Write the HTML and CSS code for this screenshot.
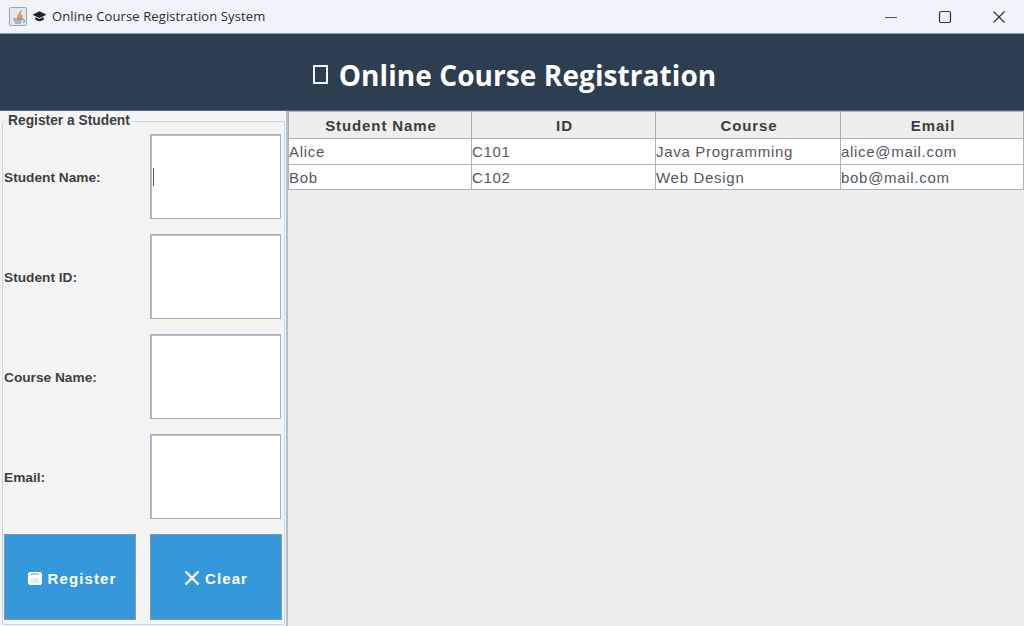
FILE: index.html
```html
<!DOCTYPE html>
<html lang="en">
<head>
<meta charset="utf-8">
<title>Online Course Registration System</title>
<link rel="stylesheet" href="styles.css">
</head>
<body>
<div class="window">
  <div class="titlebar">
    <div class="app-title">
      <svg class="java-icon" width="20" height="20" viewBox="0 0 20 20">
        <rect x="0.5" y="0.5" width="17" height="18" rx="1.5" fill="#e4e8ee" stroke="#9aa5b3"/>
        <path d="M8 13 L8 9 L11 4 L13 3 L12 7 L14 9 L13 13Z" fill="#ea9a58"/>
        <path d="M4 12h10M5 14h8M6 16h6" stroke="#5f86ad" stroke-width="1.2" fill="none"/>
        <path d="M14 12.500a1.500 1.500 0 0 1 0 3" stroke="#5f86ad" fill="none"/>
      </svg>
      <svg class="cap-icon" width="15" height="13" viewBox="0 0 16 13">
        <path d="M8 1 L15.500 4.500 L8 8 L0.500 4.500Z" fill="#222"/>
        <path d="M3.500 7 L3.500 10 Q8 13 12.500 10 L12.500 7 L8 9.200Z" fill="#222"/>
      </svg>
      <span class="title-text">Online Course Registration System</span>
    </div>
    <div class="win-controls">
      <svg class="ctl" width="14" height="14" viewBox="0 0 14 14"><path d="M1 7.500h12" stroke="#555" fill="none"/></svg>
      <svg class="ctl" width="14" height="14" viewBox="0 0 14 14"><rect x="1.500" y="1.500" width="11" height="11" rx="1.500" stroke="#333" stroke-width="1.200" fill="none"/></svg>
      <svg class="ctl" width="14" height="14" viewBox="0 0 14 14"><path d="M1.500 1.500l11 11M12.500 1.500l-11 11" stroke="#333" stroke-width="1.200" fill="none"/></svg>
    </div>
  </div>
  <header class="banner">
    <span class="tofu"></span>
    <h1 class="banner-title">Online Course Registration</h1>
  </header>
  <main class="content">
    <aside class="side">
      <fieldset class="group">
        <legend class="group-title">Register a Student</legend>
        <div class="form-grid">
          <label class="field-label">Student Name:</label>
          <div class="input focused"><span class="caret"></span></div>
          <label class="field-label">Student ID:</label>
          <div class="input"></div>
          <label class="field-label">Course Name:</label>
          <div class="input"></div>
          <label class="field-label">Email:</label>
          <div class="input"></div>
          <button class="btn btn-register" type="button">
            <svg width="14" height="13" viewBox="0 0 14 13"><path d="M0 1.500 1.500 0H12.500L14 1.500V11.500L12.500 13H1.500L0 11.500Z" fill="#fff"/><rect x="3" y="1" width="8" height="2" fill="#a8cdee"/><rect x="3" y="6" width="8" height="5" fill="#dcecf9"/></svg>
            <span>Register</span>
          </button>
          <button class="btn" type="button">
            <svg width="16" height="16" viewBox="0 0 16 16"><path d="M1.500 1.500l13 13M14.500 1.500l-13 13" stroke="#fff" stroke-width="2.400" fill="none"/></svg>
            <span>Clear</span>
          </button>
        </div>
      </fieldset>
    </aside>
    <section class="table-area">
      <table class="grid">
        <colgroup>
          <col class="c1"><col class="c2"><col class="c3"><col class="c4">
        </colgroup>
        <thead>
          <tr><th>Student Name</th><th>ID</th><th>Course</th><th>Email</th></tr>
        </thead>
        <tbody>
          <tr><td>Alice</td><td>C101</td><td>Java Programming</td><td>alice@mail.com</td></tr>
          <tr><td>Bob</td><td>C102</td><td>Web Design</td><td>bob@mail.com</td></tr>
        </tbody>
      </table>
    </section>
  </main>
</div>
</body>
</html>
```

FILE: styles.css
```css
* { box-sizing: border-box; }
html, body { margin: 0; padding: 0; }
body { font-family: "Liberation Sans", Arial, sans-serif; background: #eee; overflow: hidden; }
.window { width: 1024px; height: 626px; display: flex; flex-direction: column; }

.titlebar { height: 34px; flex: none; background: #eef4f9; display: flex; justify-content: space-between; align-items: center; border-bottom: 1px solid #8f9dab; }
.app-title { display: flex; align-items: center; padding-left: 9px; }
.java-icon { display: block; margin-right: 3px; }
.cap-icon { display: block; margin-right: 5px; }
.title-text { font-family: "Open Sans", sans-serif; font-size: 13px; color: #2a2a2a; letter-spacing: 0.12px; padding-bottom: 2px; }
.win-controls { display: flex; gap: 40px; padding-right: 18px; }
.ctl { display: block; }

.banner { height: 77px; flex: none; background: #2c3e50; display: flex; justify-content: center; align-items: center; gap: 11px; padding: 5px 0 0 5px; border-bottom: 1px solid #55677a; }
.tofu { display: block; width: 15px; height: 19px; border: 2px solid #f4f6f8; }
.banner-title { margin: 0; font-family: "Open Sans", sans-serif; font-weight: 700; font-size: 28px; letter-spacing: 0.08px; line-height: 38px; color: #fff; }

.content { flex: 1; display: flex; min-height: 0; }
.side { width: 288px; flex: none; background: #f4f4f4; border-right: 2px solid #b6bec7; padding: 3px 1px 3px 2px; }
.group { margin: 0; padding: 6px 0 0 1px; height: 511px; border: 1px solid #c5d8ea; border-radius: 2px; min-width: 0; }
.group-title { margin-left: 1px; padding: 0 3px; font-size: 13.800px; font-weight: 700; color: #3c3f44; line-height: 14px; white-space: nowrap; }
.form-grid { display: grid; grid-template-columns: 132px 131px; column-gap: 14px; grid-auto-rows: 85px; row-gap: 15px; }
.field-label { font-size: 13.700px; font-weight: 700; color: #3c3f44; align-self: center; white-space: nowrap; padding-top: 2px; }
.input { background: #fff; border: 1px solid #a5b1bf; box-shadow: inset 1px 1px 0 #b4bdc8; position: relative; }
.caret { position: absolute; left: 2px; top: 33px; width: 1px; height: 18px; background: #555; }
.btn { background: #3498db; border: 1px solid #7f98ad; color: #fff; font-family: inherit; font-size: 15px; font-weight: 700; letter-spacing: 1.1px; display: flex; align-items: center; justify-content: center; gap: 5px; padding: 2px 0 0; width: 132px; height: 86px; }
.btn-register { gap: 6px; padding-left: 4px; }
.btn svg { display: block; }

.table-area { flex: 1; background: #eee; min-width: 0; }
.grid { border-collapse: collapse; table-layout: fixed; width: 735px; }
.c1 { width: 183px; } .c2 { width: 184px; } .c3 { width: 185px; } .c4 { width: 183px; }
.grid th { height: 27px; padding: 1px 0 0 2px; background: #eee; border: 1px solid #a7b3c0; font-size: 15px; font-weight: 700; color: #3a3d42; letter-spacing: 0.9px; text-align: center; }
.grid td { height: 25.500px; padding: 1px 0 0; background: #fff; border: 1px solid #a7b3c0; font-size: 15px; color: #55585c; letter-spacing: 0.7px; white-space: nowrap; }
```
